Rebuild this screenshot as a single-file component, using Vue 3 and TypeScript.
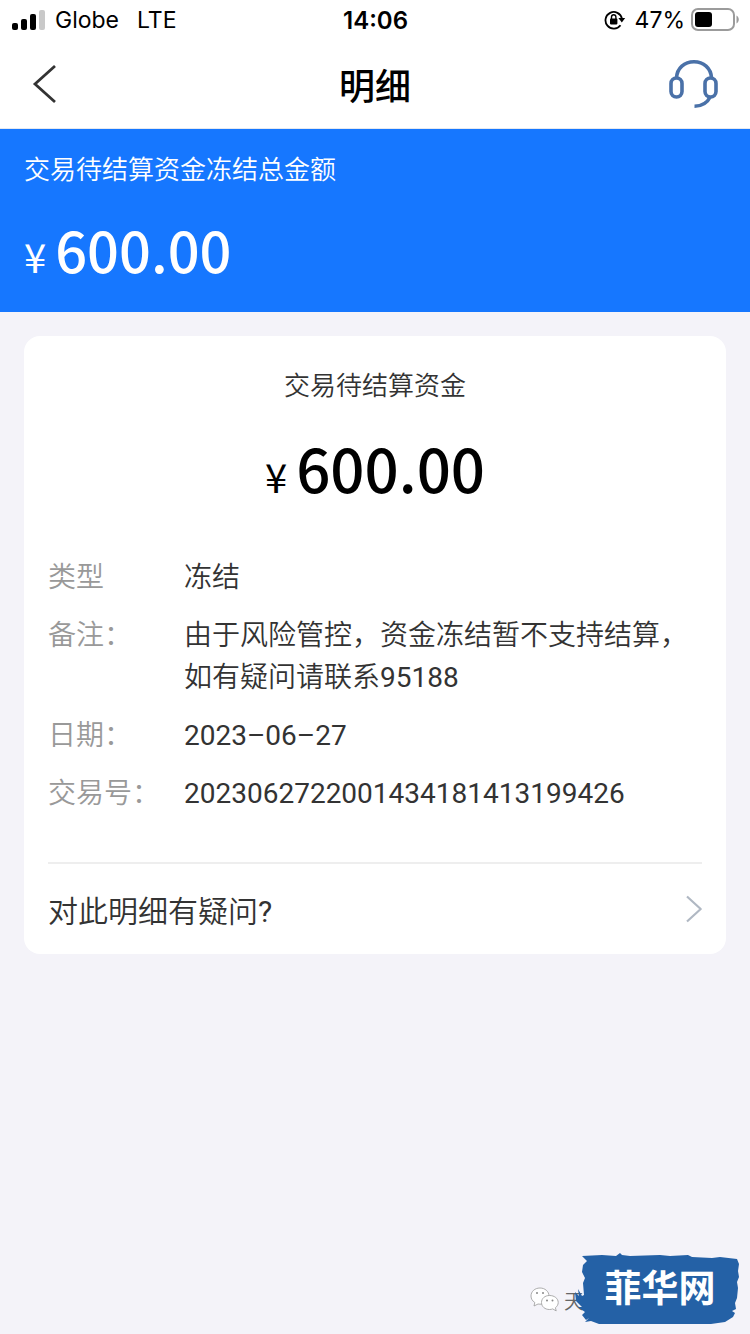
<script setup lang="ts">
interface DetailRow {
  label: string
  value: string
}

const rows: DetailRow[] = [
  { label: '类型', value: '冻结' },
  { label: '备注：', value: '由于风险管控，资金冻结暂不支持结算，如有疑问请联系95188' },
  { label: '日期：', value: '2023–06–27' },
  { label: '交易号：', value: '2023062722001434181413199426' },
]
</script>

<template>
  <div class="page" lang="zh-CN">
    <div class="status">
      <div class="status-side">
        <svg class="signal" width="33" height="22" viewBox="0 0 33 22" aria-hidden="true">
          <rect x="0" y="14" width="6" height="7" rx="2" fill="#000" />
          <rect x="9" y="10" width="6" height="11" rx="2" fill="#000" />
          <rect x="18" y="5" width="6" height="16" rx="2" fill="#000" />
          <rect x="27" y="1" width="6" height="20" rx="2" fill="#c9c9c9" />
        </svg>
        <span>Globe</span>
        <span class="network">LTE</span>
      </div>
      <span class="time">14:06</span>
      <div class="status-side end">
        <svg width="22" height="20" viewBox="0 0 22 20" aria-hidden="true">
          <path d="M16.500 15.200A8.300 8.300 0 1 1 17.900 8.500" fill="none" stroke="#000" stroke-width="1.800" />
          <path d="M14.400 8h6.800l-3.400 4.600z" fill="#000" />
          <rect x="6" y="8.600" width="7.400" height="5.800" rx="0.800" fill="#000" />
          <path d="M7.500 9V7a2.200 2.200 0 0 1 4.400 0v2" fill="none" stroke="#000" stroke-width="1.400" />
        </svg>
        <span class="percent">47%</span>
        <svg width="48" height="24" viewBox="0 0 48 24" aria-hidden="true">
          <rect x="1" y="1" width="42" height="21" rx="6" fill="none" stroke="#9b9b9b" stroke-width="2" />
          <rect x="4" y="4" width="17" height="15" rx="3" fill="#000" />
          <path d="M45.500 7.500c3 1.500 3 6.500 0 8z" fill="#9b9b9b" />
        </svg>
      </div>
    </div>

    <header class="nav">
      <button class="icon-button" type="button" aria-label="返回">
        <svg width="25" height="40" viewBox="0 0 25 40" aria-hidden="true">
          <path d="M24 2L4 20l20 18" fill="none" stroke="#333" stroke-width="2.800" />
        </svg>
      </button>
      <h1>明细</h1>
      <button class="icon-button end" type="button" aria-label="客服">
        <svg width="50" height="50" viewBox="0 0 50 50" fill="none" stroke="#4a71a8" stroke-width="3.600" aria-hidden="true">
          <rect x="2" y="19" width="11" height="19" rx="5.500" />
          <rect x="36" y="19" width="11" height="19" rx="5.500" />
          <path d="M7.500 19C8 9 15.500 2.800 25 2.800S42 9 42.500 19" />
          <path d="M41.500 37.500C38.500 43.500 33 47.200 25.500 47.200" />
        </svg>
      </button>
    </header>

    <section class="summary">
      <p class="summary-label">交易待结算资金冻结总金额</p>
      <p class="amount"><span class="yen">¥</span>600.00</p>
    </section>

    <main class="card">
      <h2>交易待结算资金</h2>
      <p class="amount large"><span class="yen">¥</span>600.00</p>
      <dl>
        <div v-for="row in rows" :key="row.label" class="row">
          <dt>{{ row.label }}</dt>
          <dd>{{ row.value }}</dd>
        </div>
      </dl>
      <a class="question" href="#">
        <span>对此明细有疑问?</span>
        <svg width="16" height="28" viewBox="0 0 16 28" fill="none" stroke="#b0b8c3" stroke-width="2.200" aria-hidden="true">
          <path d="M1 1.500L14.700 14 1 26.500" stroke-linejoin="round" />
        </svg>
      </a>
    </main>

    <footer class="source">
      <svg class="wechat" width="30" height="26" viewBox="0 0 30 26" fill="#fff" stroke="#999" stroke-width="0.800" aria-hidden="true">
        <path d="M10 1C4.800 1 1 4.500 1 9c0 2.800 1.400 5 3.800 6.500L4 19l4-2c5 1 11-2 11-8 0-4.500-4-8-9-8z" />
        <path d="M19.500 8.500c-4.700 0-8 3-8 7s3.300 7 8 7c1.200 0 2.200-.2 3.200-.6l3.500 2-.8-3.200c1.800-1.300 2.800-3.100 2.800-5.200 0-4-3.700-7-8.700-7z" />
        <g fill="#888" stroke="none">
          <circle cx="7" cy="6" r="1" /><circle cx="13" cy="6" r="1" />
          <circle cx="17" cy="13.500" r="1" /><circle cx="22.500" cy="13.500" r="1" />
        </g>
      </svg>
      <span class="account">天</span>
      <div class="stamp">
        <svg class="brush" viewBox="0 0 168 72" preserveAspectRatio="none" aria-hidden="true">
          <path fill="#2461a6" d="M10 4L30 3l14 1 4-3 2 2 8 1 30-1 10 1 18-1 4 2 20 1 8-1 17 2 2 5-1 7 1 6-2 5 1 6-1 10-2 5 1 6-4 2 3 2-2 4-8 5-14 2-6 5-8-1-6-4-3 5-23 1-8-3-12 2-10-4-12 1-10 2-5-4-9 0-8-3-6 1 4-4-3 2-4-5 3-3-7-5 4 0-6-6-1-9 4 4-1-7 4 7 2-1-1-12 2-5-3-6 1-7 4-4z" />
          <path fill="none" stroke="#2461a6" stroke-width="1" d="M14 62l8 5M28 64l9 2M60 67l14 2M98 68l12 1M132 66l12-3" />
        </svg>
        <span class="stamp-text">菲华网</span>
      </div>
    </footer>
  </div>
</template>

<style>
body {
  background: #f4f3f9;
}
</style>

<style scoped>
.page {
  display: flex;
  flex-direction: column;
  min-height: 100vh;
  background: #f4f3f9;
  color: #333;
  font-family: Roboto, "Noto Sans CJK SC DemiLight", "Noto Sans CJK SC", sans-serif;
  font-weight: 400;
}

h1, h2, p, dl, dd {
  margin: 0;
}

svg {
  display: block;
  flex: none;
}

.status {
  display: grid;
  grid-template-columns: 1fr auto 1fr;
  align-items: center;
  height: 40px;
  padding: 0 11px 0 12px;
  background: #fff;
  color: #000;
  font-family: Inter, sans-serif;
  font-size: 23px;
}

.status-side {
  display: flex;
  align-items: center;
}

.signal {
  margin-right: 10px;
}

.network {
  margin-left: 18px;
}

.percent {
  margin: 0 6px 0 9px;
}

.time {
  font-size: 24px;
  font-weight: 600;
}

.end {
  justify-content: flex-end;
}

.nav {
  display: grid;
  grid-template-columns: 1fr auto 1fr;
  align-items: center;
  height: 88px;
  padding: 0 31px;
  background: #fff;
  border-bottom: 1px solid #e4e8f0;
}

.icon-button {
  display: flex;
  padding: 0;
  border: 0;
  background: none;
}

h1 {
  color: #000;
  font-family: "Noto Sans CJK SC", sans-serif;
  font-size: 36px;
  line-height: 52px;
  font-weight: 500;
}

.summary {
  padding: 21px 24px 23px;
  background: #1677ff;
  color: #fff;
}

.summary-label {
  font-size: 26px;
  line-height: 40px;
}

.amount {
  margin-top: 18px;
  font-family: "Noto Sans CJK SC", sans-serif;
  font-size: 56px;
  line-height: 81px;
  font-weight: 500;
}

.yen {
  margin-right: 9px;
  font-size: 40px;
  line-height: 40px;
  font-weight: 400;
}

.card {
  margin: 24px;
  padding: 28px 24px 0;
  border-radius: 16px;
  background: #fff;
}

h2 {
  font-size: 26px;
  line-height: 44px;
  font-weight: 400;
  text-align: center;
}

.large {
  margin-top: 15px;
  color: #000;
  font-size: 60px;
  line-height: 88px;
  text-align: center;
}

dl {
  display: flex;
  flex-direction: column;
  gap: 16px;
  margin-top: 46px;
  padding-bottom: 47px;
  border-bottom: 2px solid #eee;
}

.row {
  display: grid;
  grid-template-columns: 136px 1fr;
  font-size: 28px;
  line-height: 42px;
}

dt {
  color: #999;
}

.question {
  display: flex;
  align-items: center;
  justify-content: space-between;
  height: 90px;
  color: #333;
  font-size: 30px;
  text-decoration: none;
}

.source {
  display: flex;
  align-items: center;
  justify-content: flex-end;
  margin-top: auto;
  padding: 0 10px 10px 0;
}

.wechat {
  margin: 24px 4px 0 0;
}

.account {
  margin-top: 24px;
  color: #666;
  font-size: 20px;
}

.stamp {
  position: relative;
  display: grid;
  place-items: center;
  width: 168px;
  height: 72px;
  margin-left: -12px;
}

.brush {
  position: absolute;
  inset: 0;
  width: 100%;
  height: 100%;
}

.stamp-text {
  position: relative;
  padding: 0 0 4px 8px;
  color: #fff;
  font-family: "Noto Sans CJK SC", sans-serif;
  font-size: 37px;
  line-height: 40px;
  font-weight: 700;
}
</style>
